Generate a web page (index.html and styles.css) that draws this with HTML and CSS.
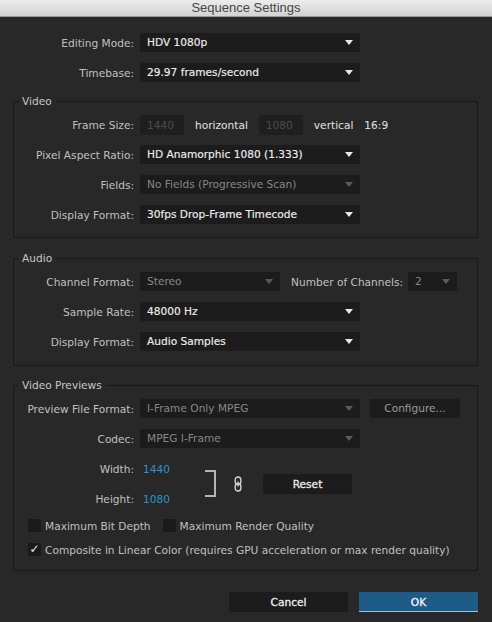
FILE: index.html
```html
<!DOCTYPE html>
<html lang="en">
<head>
    <meta charset="UTF-8">
    <title>Sequence Settings</title>
    <link rel="stylesheet" href="styles.css">
</head>
<body>
    <div class="titlebar">Sequence Settings</div>

    <div class="dialog">
        <div class="row">
            <span class="lbl">Editing Mode:</span>
            <div class="select">HDV 1080p</div>
        </div>
        <div class="row">
            <span class="lbl">Timebase:</span>
            <div class="select">29.97 frames/second</div>
        </div>

        <fieldset class="group">
            <legend>Video</legend>
            <div class="row">
                <span class="lbl">Frame Size:</span>
                <div class="field">1440</div>
                <span class="txt">horizontal</span>
                <div class="field">1080</div>
                <span class="txt">vertical</span>
                <span class="txt">16:9</span>
            </div>
            <div class="row">
                <span class="lbl">Pixel Aspect Ratio:</span>
                <div class="select">HD Anamorphic 1080 (1.333)</div>
            </div>
            <div class="row">
                <span class="lbl">Fields:</span>
                <div class="select off">No Fields (Progressive Scan)</div>
            </div>
            <div class="row">
                <span class="lbl">Display Format:</span>
                <div class="select">30fps Drop-Frame Timecode</div>
            </div>
        </fieldset>

        <fieldset class="group audio">
            <legend>Audio</legend>
            <div class="row">
                <span class="lbl">Channel Format:</span>
                <div class="select off narrow">Stereo</div>
                <span class="txt">Number of Channels:</span>
                <div class="select off tiny">2</div>
            </div>
            <div class="row">
                <span class="lbl">Sample Rate:</span>
                <div class="select">48000 Hz</div>
            </div>
            <div class="row">
                <span class="lbl">Display Format:</span>
                <div class="select">Audio Samples</div>
            </div>
        </fieldset>

        <fieldset class="group previews">
            <legend>Video Previews</legend>
            <div class="row">
                <span class="lbl">Preview File Format:</span>
                <div class="select off">I-Frame Only MPEG</div>
                <div class="btn configure">Configure...</div>
            </div>
            <div class="row">
                <span class="lbl">Codec:</span>
                <div class="select off">MPEG I-Frame</div>
            </div>

            <div class="dims">
                <div class="dim-rows">
                    <div class="row">
                        <span class="lbl">Width:</span>
                        <span class="dim-val">1440</span>
                    </div>
                    <div class="row">
                        <span class="lbl">Height:</span>
                        <span class="dim-val">1080</span>
                    </div>
                </div>
                <div class="bracket"></div>
                <svg class="link" width="8" height="16" viewBox="0 0 8 16">
                    <rect x="1.2" y="1" width="5.6" height="7.5" rx="2.8" fill="none" stroke="#d2d2d2" stroke-width="1.4"/>
                    <rect x="1.2" y="7.5" width="5.6" height="7.5" rx="2.8" fill="none" stroke="#d2d2d2" stroke-width="1.4"/>
                    <line x1="4" y1="5.5" x2="4" y2="10.5" stroke="#d2d2d2" stroke-width="1.4"/>
                </svg>
                <div class="btn reset">Reset</div>
            </div>

            <div class="checks">
                <label class="check"><span class="box"></span>Maximum Bit Depth</label>
                <label class="check"><span class="box"></span>Maximum Render Quality</label>
            </div>
            <div class="checks">
                <label class="check"><span class="box on">✓</span>Composite in Linear Color (requires GPU acceleration or max render quality)</label>
            </div>
        </fieldset>

        <div class="actions">
            <div class="btn">Cancel</div>
            <div class="btn primary">OK</div>
        </div>
    </div>
</body>
</html>
```

FILE: styles.css
```css
body {
    margin: 0;
    width: 492px;
    height: 622px;
    overflow: hidden;
    background: #282828;
    font-family: "DejaVu Sans", sans-serif;
    font-size: 10.6px;
    color: #c0c0c0;
}

.titlebar {
    height: 16px;
    line-height: 16px;
    background: linear-gradient(#ececec, #d2d2d2);
    border-bottom: 1px solid #9c9c9c;
    text-align: center;
    font-family: "Liberation Sans", Arial, sans-serif;
    font-size: 13px;
    color: #474747;
}

.dialog {
    padding-top: 16px;
}

.row {
    display: flex;
    align-items: center;
    height: 19px;
}

.row + .row {
    margin-top: 11px;
}

.lbl {
    flex: none;
    width: 134px;
    margin-right: 6px;
    text-align: right;
    white-space: nowrap;
}

.group .lbl {
    width: 120px;
}

.select {
    position: relative;
    flex: none;
    box-sizing: border-box;
    width: 220px;
    height: 19px;
    line-height: 19px;
    padding-left: 7px;
    background: #1c1c1c;
    color: #eeeeee;
    white-space: nowrap;
    -webkit-text-stroke: 0.15px #eeeeee;
}

.select::after {
    content: '';
    position: absolute;
    right: 7px;
    top: 7px;
    border-left: 4px solid transparent;
    border-right: 4px solid transparent;
    border-top: 5px solid #e8e8e8;
}

.select.off {
    color: #878787;
    -webkit-text-stroke: 0;
}

.select.off::after {
    border-top-color: #5a5a5a;
}

.select.narrow {
    width: 140px;
}

.select.tiny {
    width: 49px;
    margin-left: 5px;
}

.field {
    flex: none;
    box-sizing: border-box;
    width: 44px;
    height: 20px;
    line-height: 20px;
    padding-left: 7px;
    background: #1f1f1f;
    color: #4c4c4c;
}

.txt {
    margin-left: 11px;
    margin-right: 11px;
    color: #dcdcdc;
    white-space: nowrap;
    -webkit-text-stroke: 0.1px #dcdcdc;
}

.txt + .txt {
    margin-left: 0;
}

.audio .txt {
    color: #c0c0c0;
    margin-right: 0;
    -webkit-text-stroke: 0;
}

/* fieldsets */
.group {
    margin: 13px 14px 0 13px;
    padding: 7px 0 13px 0;
    border: 1px solid #191919;
    min-width: 0;
}

.group.audio {
    margin-top: 14px;
    padding-bottom: 14px;
}

.group.previews {
    padding-bottom: 12px;
}

.group legend {
    margin-left: 4px;
    padding: 0 4px;
    line-height: 13px;
    color: #c6c6c6;
}

.btn {
    box-sizing: border-box;
    height: 20px;
    line-height: 20px;
    background: #1c1c1c;
    color: #ececec;
    text-align: center;
    -webkit-text-stroke: 0.3px #ececec;
}

.btn.configure {
    width: 90px;
    height: 19px;
    line-height: 19px;
    margin-left: 10px;
    color: #9a9a9a;
    -webkit-text-stroke: 0;
}

/* width / height block */
.dims {
    display: flex;
    align-items: center;
    margin-top: 11px;
}

.dim-val {
    box-sizing: border-box;
    width: 65px;
    padding-left: 3px;
    color: #2e93d1;
}

.bracket {
    width: 9px;
    height: 23px;
    border: 2px solid #b4b4b4;
    border-left: none;
}

.link {
    margin-left: 18px;
}

.btn.reset {
    width: 89px;
    margin-left: 21px;
}

.checks {
    display: flex;
    align-items: center;
    height: 17px;
    margin-top: 9px;
    padding-left: 14px;
}

.checks + .checks {
    margin-top: 7px;
}

.check {
    display: flex;
    align-items: center;
    white-space: nowrap;
    margin-right: 12px;
}

.box {
    width: 13px;
    height: 13px;
    margin-right: 4px;
    background: #1a1a1a;
    color: #f0f0f0;
    font-size: 12px;
    line-height: 13px;
    text-align: center;
}

.actions {
    display: flex;
    justify-content: flex-end;
    gap: 11px;
    margin: 21px 14px 0 0;
}

.actions .btn {
    width: 119px;
}

.btn.primary {
    background: #1e5b86;
    color: #ffffff;
    box-shadow: inset 0 -1px 0 #8fc3e3;
}
```
